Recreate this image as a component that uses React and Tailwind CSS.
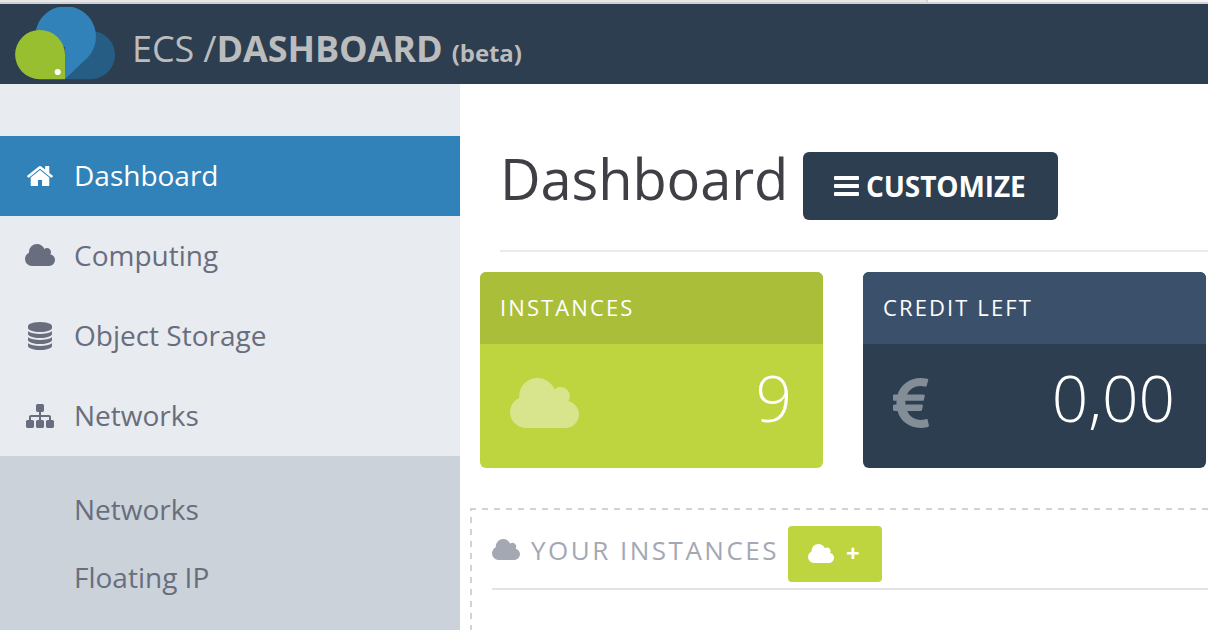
const ICONS = {
  cloud: {
    box: '0 128 1920 1408',
    d: 'M1920 1152q0 159-112.5 271.5t-271.5 112.5h-1088q-185 0-316.5-131.5t-131.5-316.5q0-132 71-241.5t187-163.5q-2-28-2-43 0-212 150-362t362-150q158 0 286.5 88t187.5 230q70-62 166-62 106 0 181 75t75 181q0 75-41 138 129 30 213 134.5t84 239.5z',
  },
  home: {
    box: '25 -1283 1614 1283',
    flip: true,
    d: 'M1408 544v-480q0 -26 -19 -45t-45 -19h-384v384h-256v-384h-384q-26 0 -45 19t-19 45v480q0 1 .5 3t.5 3l575 474l575 -474q1 -2 1 -6zM1631 613l-62 -74q-8 -9 -21 -11h-3q-13 0 -21 7l-692 577l-692 -577q-12 -8 -24 -7q-13 2 -21 11l-62 74q-8 10 -7 23.5t11 21.5l719 599q32 26 76 26t76 -26l244 -204v195q0 14 9 23t23 9h192q14 0 23 -9t9 -23v-408l219 -182q10 -8 11 -21.5t-7 -23.5z',
  },
  database: {
    box: '0 -1536 1536 1792',
    flip: true,
    d: 'M768 768q237 0 443 43t325 127v-170q0 -69 -103 -128t-280 -93.5t-385 -34.5t-385 34.5t-280 93.5t-103 128v170q119 -84 325 -127t443 -43zM768 0q237 0 443 43t325 127v-170q0 -69 -103 -128t-280 -93.5t-385 -34.5t-385 34.5t-280 93.5t-103 128v170q119 -84 325 -127t443 -43zM768 384q237 0 443 43t325 127v-170q0 -69 -103 -128t-280 -93.5t-385 -34.5t-385 34.5t-280 93.5t-103 128v170q119 -84 325 -127t443 -43zM768 1536q208 0 385 -34.5t280 -93.5t103 -128v-128q0 -69 -103 -128t-280 -93.5t-385 -34.5t-385 34.5t-280 93.5t-103 128v128q0 69 103 128t280 93.5t385 34.5z',
  },
  sitemap: {
    box: '0 -1408 1792 1536',
    flip: true,
    d: 'M1792 288v-320q0 -40 -28 -68t-68 -28h-320q-40 0 -68 28t-28 68v320q0 40 28 68t68 28h96v192h-512v-192h96q40 0 68 -28t28 -68v-320q0 -40 -28 -68t-68 -28h-320q-40 0 -68 28t-28 68v320q0 40 28 68t68 28h96v192h-512v-192h96q40 0 68 -28t28 -68v-320q0 -40 -28 -68t-68 -28h-320q-40 0 -68 28t-28 68v320q0 40 28 68t68 28h96v192q0 52 38 90t90 38h512v192h-96q-40 0 -68 28t-28 68v320q0 40 28 68t68 28h320q40 0 68 -28t28 -68v-320q0 -40 -28 -68t-68 -28h-96v-192h512q52 0 90 -38t38 -90v-192h96q40 0 68 -28t28 -68z',
  },
  bars: {
    box: '0 -1280 1536 1280',
    flip: true,
    d: 'M1536 192v-128q0 -26 -19 -45t-45 -19h-1408q-26 0 -45 19t-19 45v128q0 26 19 45t45 19h1408q26 0 45 -19t19 -45zM1536 704v-128q0 -26 -19 -45t-45 -19h-1408q-26 0 -45 19t-19 45v128q0 26 19 45t45 19h1408q26 0 45 -19t19 -45zM1536 1216v-128q0 -26 -19 -45t-45 -19h-1408q-26 0 -45 19t-19 45v128q0 26 19 45t45 19h1408q26 0 45 -19t19 -45z',
  },
  euro: {
    box: '0 -1408 1013 1408',
    flip: true,
    d: 'M976 229l35 -159q3 -12 -3 -22.5t-17 -14.5l-5 -1q-4 -2 -10.5 -3.5t-16 -4.5t-21.5 -5.5t-25.5 -5t-30 -5t-33.5 -4.5t-36.5 -3t-38.5 -1q-234 0 -409 130.5t-238 351.5h-95q-13 0 -22.5 9.5t-9.5 22.5v113q0 13 9.5 22.5t22.5 9.5h66q-2 57 1 105h-67q-14 0 -23 9t-9 23v114q0 14 9 23t23 9h98q67 210 243.5 338t400.5 128q102 0 194 -23q11 -3 20 -15q6 -11 3 -24l-43 -159q-3 -13 -14 -19.5t-24 -2.5l-4 1q-4 1 -11.5 2.5l-17.5 3.5t-22.5 3.5t-26 3t-29 2.5t-29.5 1q-126 0 -226 -64t-150 -176h468q16 0 25 -12q10 -12 7 -26l-24 -114q-5 -26 -32 -26h-488q-3 -37 0 -105h459q15 0 25 -12q9 -12 6 -27l-24 -112q-2 -11 -11 -18.5t-20 -7.5h-387q48 -117 149.5 -185.5t228.5 -68.5q18 0 36 1.5t33.5 3.5t29.5 4.5t24.5 5t18.5 4.5l12 3l5 2q13 5 26 -2q12 -7 15 -21z',
  },
};

function Icon({ name, className }) {
  const icon = ICONS[name];
  return (
    <svg viewBox={icon.box} className={`shrink-0 ${className}`} fill="currentColor" preserveAspectRatio="none" aria-hidden="true">
      <path d={icon.d} transform={icon.flip ? 'scale(1 -1)' : undefined} />
    </svg>
  );
}

function Logo() {
  return (
    <svg viewBox="0.300 0 102 74" className="h-[74px] w-[102px] shrink-0" aria-hidden="true">
      <path d="M50 72.200H76.200A24.200 24.200 0 0 0 76.200 23.800H60z" fill="#255d84" />
      <path d="M50 72.200V40L20.500 31A30.400 30.400 0 1 1 72.500 51Z" fill="#3182b8" />
      <path d="M50.300 72.200H25A24.600 24.600 0 0 1 25 23A25.300 24.600 0 0 1 50.300 47.600Z" fill="#97bf30" />
      <circle cx="43" cy="65" r="3.100" fill="#fff" />
    </svg>
  );
}

function NavItem({ icon, iconClass, label, active }) {
  return (
    <a className={`flex h-20 items-center ${active ? 'bg-[#3182b8] text-white' : 'text-[#686e7d]'}`}>
      <span className="ml-5 flex w-10 justify-center">
        <Icon name={icon} className={iconClass} />
      </span>
      <span className="ml-3.5 pb-0.5 text-[28px] leading-10">{label}</span>
    </a>
  );
}

function StatCard({ title, value, headClass, bodyClass, children }) {
  return (
    <section className={`flex h-[196px] w-[343px] shrink-0 flex-col overflow-hidden rounded-md text-white ${bodyClass}`}>
      <h2 className={`flex h-[72px] items-center pb-0.5 pl-5 text-[22px] tracking-[2.1px] ${headClass}`}>{title}</h2>
      <div className="flex flex-1 items-start justify-between pr-[31px] pl-[30px]">
        {children}
        <span className="mt-[9px] text-[64px] leading-[90px] font-light">{value}</span>
      </div>
    </section>
  );
}

export default function App() {
  return (
    <div className="flex h-[630px] w-[1208px] flex-col overflow-hidden bg-white font-['Open_Sans',sans-serif] antialiased">
      <div className="flex h-1 shrink-0 border-b-2 border-[#d2d0d2]">
        <div className="w-[928px] border-r-2 border-[#d2d0d2] bg-[#e8e8e8]" />
        <div className="flex-1 bg-[#f4f4f4]" />
      </div>
      <header className="flex h-20 shrink-0 items-start bg-[#2c3e50] pt-[3px] pl-[15px] text-[#bbbcbd]">
        <Logo />
        <div className="mt-[17px] ml-[15px] text-[36px] leading-[50px] tracking-[-0.1px] whitespace-pre">
          <span>ECS /</span>
          <span className="font-bold">DASHBOARD </span>
          <span className="text-[24px] font-bold">(beta)</span>
        </div>
      </header>
      <div className="flex min-h-0 flex-1">
        <aside className="flex w-[460px] shrink-0 flex-col bg-[#e8ebf0] pt-[52px]">
          <nav>
            <NavItem icon="home" iconClass="h-5 w-[26px]" label="Dashboard" active />
            <NavItem icon="cloud" iconClass="h-[22px] w-[30px] -mt-0.5" label="Computing" />
            <NavItem icon="database" iconClass="h-7 w-6" label="Object Storage" />
            <NavItem icon="sitemap" iconClass="h-6 w-7" label="Networks" />
          </nav>
          <div className="flex flex-1 flex-col bg-[#cbd2da] pt-[19px] pl-[74px] text-[28px] text-[#686e7d]">
            <a className="flex h-[68px] items-center leading-10">Networks</a>
            <a className="flex h-[68px] items-center leading-10">Floating IP</a>
          </div>
        </aside>
        <main className="flex min-w-0 flex-1 flex-col">
          <div className="ml-10 flex h-[168px] items-start border-b-2 border-[#e8ecef]">
            <h1 className="mt-[54px] w-[303px] text-[56px] leading-[80px] tracking-[-0.1px] text-[#3f4045]">Dashboard</h1>
            <button className="mt-[68px] flex h-[68px] w-[255px] items-center gap-[7px] rounded-md bg-[#2c3e50] pl-[31px] text-[28px] font-bold tracking-[-0.1px] text-white">
              <Icon name="bars" className="h-5 w-[25px]" />
              <span className="pb-px">CUSTOMIZE</span>
            </button>
          </div>
          <div className="mt-5 ml-5 flex gap-10">
            <StatCard title="INSTANCES" value="9" headClass="bg-[#aabe3a]" bodyClass="bg-[#bed540]">
              <Icon name="cloud" className="mt-[34px] h-[50px] w-[69px] text-[#d9e58d]" />
            </StatCard>
            <StatCard title="CREDIT LEFT" value="0,00" headClass="bg-[#3b516b]" bodyClass="bg-[#2c3e50]">
              <Icon name="euro" className="mt-[34px] h-[50px] w-[36px] text-[#838d97]" />
            </StatCard>
          </div>
          <section className="mt-10 ml-2.5 flex-1 bg-[image:repeating-linear-gradient(90deg,#d2d2d3_0_6px,transparent_6px_12px),repeating-linear-gradient(180deg,#d2d2d3_0_3px,transparent_3px_9px,#d2d2d3_9px_12px)] bg-[length:100%_2px,2px_100%] bg-no-repeat pt-[18px] pl-[22px]">
            <div className="flex h-16 items-start border-b-2 border-[#e2e2e7]">
              <Icon name="cloud" className="mt-[13px] h-[21px] w-7 text-[#a3a8b3]" />
              <h2 className="mt-1 ml-[11px] w-[257px] text-[26px] leading-10 tracking-[2.5px] whitespace-nowrap text-[#a3a8b3]">YOUR INSTANCES</h2>
              <button className="flex h-14 w-[94px] items-center rounded bg-[#bed540] pl-5 text-white">
                <Icon name="cloud" className="h-[19px] w-[26px] -mt-0.5" />
                <span className="ml-3 pb-0.5 text-[24px] font-bold">+</span>
              </button>
            </div>
          </section>
        </main>
      </div>
    </div>
  );
}
